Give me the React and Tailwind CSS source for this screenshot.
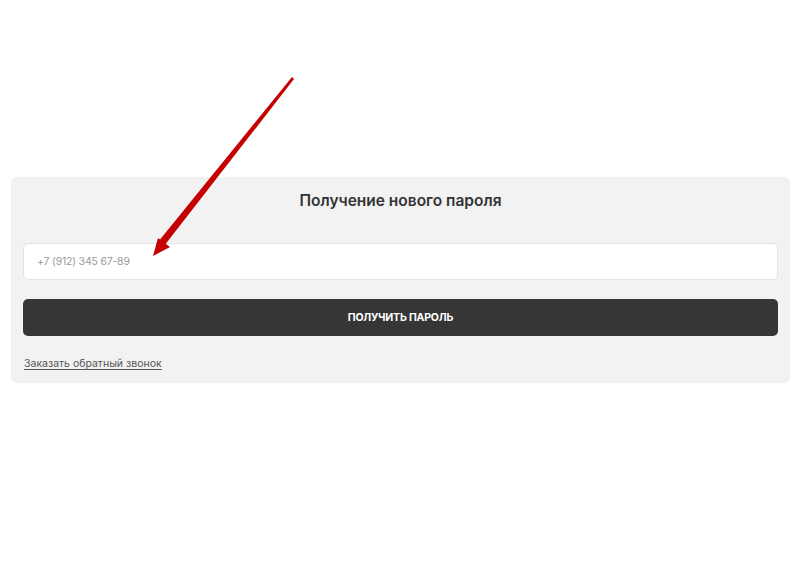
export default function App() {
  return (
    <div className="relative min-h-[563px] bg-white font-['Inter','Noto_Sans',sans-serif]">
      <div className="px-[11px] pt-[177px] pr-[10px]">
        <div className="rounded-[5px] bg-[#f2f2f2] px-3 pt-[13px] pb-[11px]">
          <h2 className="text-center text-[15.5px] leading-[22px] font-semibold text-[#333333]">
            Получение нового пароля
          </h2>

          <input
            type="tel"
            placeholder="+7 (912) 345 67-89"
            className="mt-[31px] block h-[37px] w-full rounded-[5px] border border-[#e3e3e3] bg-white px-[13px] text-[10.5px] tracking-[-0.2px] text-[#333] placeholder:text-[#9a9a9a] outline-none"
          />

          <button
            type="button"
            className="mt-[19px] flex h-[37px] w-full items-center justify-center rounded-[5px] bg-[#363636] text-[10.5px] font-bold tracking-[-0.2px] text-white"
          >
            ПОЛУЧИТЬ ПАРОЛЬ
          </button>

          <a href="#" className="mt-[20px] ml-px block w-fit text-[10.5px] leading-[16px] text-[#555555] underline underline-offset-2">
            Заказать обратный звонок
          </a>
        </div>
      </div>

      {/* red pointer arrow drawn over the form */}
      <svg className="pointer-events-none absolute left-0 top-0" width="800" height="563" viewBox="0 0 800 563">
        <polygon points="292,77 294,79 164,246 158,242" fill="#c40000" />
        <polygon points="153,256 170,247 158,238" fill="#c40000" />
      </svg>
    </div>
  );
}
